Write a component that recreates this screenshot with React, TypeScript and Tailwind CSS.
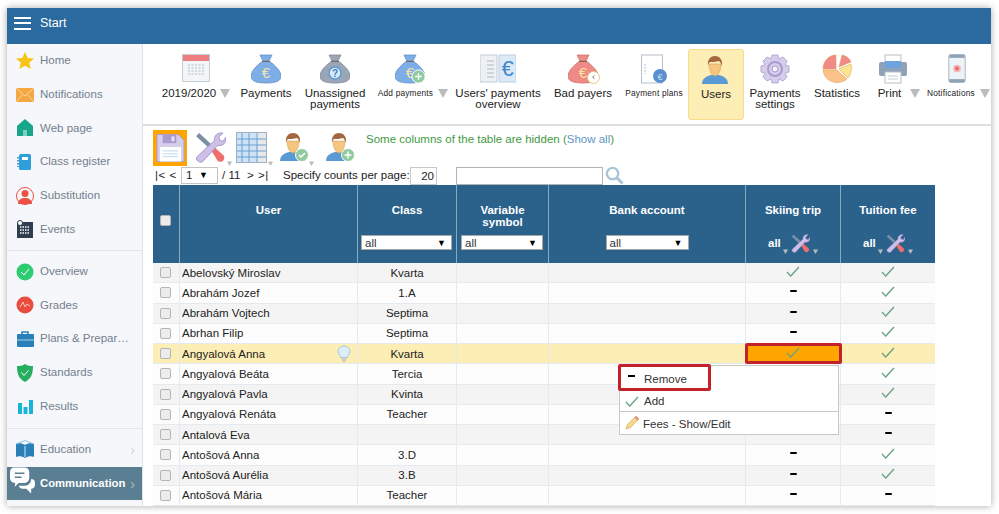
import { ReactNode } from 'react';

const Check = ({ className = 'w-[14px] h-[11px]' }: { className?: string }) => (
  <svg viewBox="0 0 15 12" className={className} fill="none">
    <path d="M1 6.500l4 4.500L14 1" stroke="#6aa583" strokeWidth="1.500" />
  </svg>
);

const Dash = () => <span className="block w-[7px] h-[2px] bg-black rounded-[1px]" />;

const Arrow = ({ className = '' }: { className?: string }) => (
  <svg viewBox="0 0 10 10" className={`w-[10px] h-[10px] ${className}`}>
    <path d="M0 1h10L5 10z" fill="#b9bcbc" />
  </svg>
);

const Bag = ({ fill, stroke, glyph, glyphColor = '#f7e6a0', disc }: { fill: string; stroke: string; glyph: string; glyphColor?: string; disc?: boolean }) => (
  <svg viewBox="0 0 30 30" className="w-[30px] h-[30px]">
    <path d="M9 1h12l-3 6h-6z" fill={fill} stroke={stroke} strokeWidth=".8" />
    <path d="M12 7h6c6 4 12 10 12 15 0 5-5 7-15 7S0 27 0 22C0 17 6 11 12 7z" fill={fill} stroke={stroke} strokeWidth=".8" />
    <path d="M11 7.500h8" stroke="#7a6a55" strokeWidth="1" />
    {disc && <circle cx="15" cy="19" r="6" fill="#dbe8f6" stroke="#5b9bd5" strokeWidth="1.500" />}
    <text x="15" y={disc ? 23 : 24} textAnchor="middle" fontSize={disc ? 10 : 15} fontWeight={disc ? 700 : 400} fontFamily="Liberation Sans" fill={glyphColor}>{glyph}</text>
  </svg>
);

const Plus = ({ cx, cy, r = 6.500 }: { cx: number; cy: number; r?: number }) => (
  <g>
    <circle cx={cx} cy={cy} r={r} fill="#8fcb9f" stroke="#fff" strokeWidth="1" />
    <path d={`M${cx - 3.500} ${cy}h7M${cx} ${cy - 3.500}v7`} stroke="#fff" strokeWidth="1.500" />
  </g>
);

const Person = ({ children }: { children?: ReactNode }) => (
  <svg viewBox="0 0 30 30" className="w-[30px] h-[30px]">
    <path d="M1 29c0-6 5-8 9-9h8c4 1 9 3 9 9z" fill="#5b9bd5" />
    <path d="M8 9c0 7 3 12 6 12s6-5 6-12z" fill="#f5c77e" stroke="#c99a55" strokeWidth=".5" />
    <path d="M7 11C6 4 10 1 14 1s8 3 7 10c-1-3-2-4-3-5-3 1-7 1-9 1-1 1-2 2-2 4z" fill="#a5673f" />
    {children}
  </svg>
);

const Wrench = ({ size = 'w-[31px] h-[31px]' }: { size?: string }) => (
  <svg viewBox="0 0 30 30" className={size}>
    <path d="M1 4l3-3 12 11-3 3z" fill="#7d8ea3" />
    <path d="M14 15l2-3 12 11c1 2 0 4-1 5s-4 1-5 0z" fill="#ef6f6c" />
    <path d="M2 24L19 8c-1-4 3-8 8-7l-4 4 1 3 3 1 3-4c1 5-3 9-8 8L7 29c-3 1-7-2-5-5z" fill="#cdbfe8" stroke="#9d8cc4" strokeWidth=".8" />
  </svg>
);

const tools = [
  {
    w: 'w-[72px]', label: '2019/2020', arrow: 'ml-[4px]',
    icon: (
      <svg viewBox="0 0 28 28" className="w-[28px] h-[28px]">
        <rect x=".5" y=".5" width="27" height="27" fill="#f3f5f7" stroke="#c4ccd4" />
        <rect x="1" y="1" width="26" height="6" fill="#ee7d7f" />
        <path d="M6 11h16M6 14h16M6 17h16M6 20h16" stroke="#c4d0dc" strokeWidth="1.400" strokeDasharray="2 1.500" />
      </svg>
    ),
  },
  { w: 'w-[68px]', label: 'Payments', icon: <Bag fill="#7eaee8" stroke="#6892c4" glyph="€" /> },
  { w: 'w-[70px]', label: 'Unassigned payments', tw: 'w-[64px]', icon: <Bag fill="#9aa5b5" stroke="#7f8a99" glyph="?" glyphColor="#3f7fc0" disc /> },
  {
    w: 'w-[80px]', label: 'Add payments', small: true, arrow: 'ml-[5px]', shift: 'ml-[6px]',
    icon: (
      <span className="relative block w-[30px] h-[30px]">
        <Bag fill="#7eaee8" stroke="#6892c4" glyph="€" />
        <svg viewBox="0 0 16 16" className="absolute -right-[1px] bottom-0 w-[15px] h-[15px]"><Plus cx={8} cy={8} r={7} /></svg>
      </span>
    ),
  },
  {
    w: 'w-[96px]', label: "Users' payments overview", tw: 'w-[96px]',
    icon: (
      <svg viewBox="0 0 36 30" className="w-[36px] h-[30px]">
        <path d="M0 1h17v27H0z" fill="#eef1f4" stroke="#c4ccd4" />
        <path d="M19 1h17v27H19z" fill="#dceaf8" stroke="#b8cfe4" />
        <path d="M7 7h7M7 11h7M7 15h7M7 19h7M7 23h7" stroke="#b0b8c0" />
        <text x="27.500" y="22" textAnchor="middle" fontSize="22" fontFamily="Liberation Sans" fill="#3f86cc">€</text>
      </svg>
    ),
  },
  {
    w: 'w-[74px]', label: 'Bad payers',
    icon: (
      <span className="relative block w-[30px] h-[30px]">
        <Bag fill="#f08a86" stroke="#cc7470" glyph="€" />
        <span className="absolute right-[-2px] bottom-0 w-[13px] h-[13px] rounded-full bg-white border border-[#e5c77a] text-[9px] leading-[10px] text-center text-[#555]">‹</span>
      </span>
    ),
  },
  {
    w: 'w-[68px]', label: 'Payment plans', small: true,
    icon: (
      <svg viewBox="0 0 30 30" className="w-[30px] h-[30px]">
        <rect x="2.500" y="1" width="21" height="28" fill="#fff" stroke="#b8c0c8" />
        <path d="M6 10v10" stroke="#c4ccd4" strokeWidth="1.500" strokeDasharray="1.500 1.500" />
        <circle cx="21" cy="22" r="7" fill="#5b8fd0" />
        <text x="21" y="25.500" textAnchor="middle" fontSize="9" fontFamily="Liberation Sans" fill="#cfe0f5">€</text>
      </svg>
    ),
  },
  { w: 'w-[56px]', label: 'Users', active: true, icon: <Person /> },
  {
    w: 'w-[62px]', label: 'Payments settings', tw: 'w-[54px]',
    icon: (
      <svg viewBox="0 0 30 30" className="w-[30px] h-[30px]">
        <path d="M12 1h6l1 4 4-2 4 4-2 4 4 1v6l-4 1 2 4-4 4-4-2-1 4h-6l-1-4-4 2-4-4 2-4-4-1v-6l4-1-2-4 4-4 4 2z" fill="#d5cdea" stroke="#a99bcf" strokeWidth=".8" />
        <circle cx="15" cy="15" r="7" fill="none" stroke="#a99bcf" strokeWidth="2" />
        <circle cx="15" cy="15" r="3" fill="#f5f5f5" stroke="#a99bcf" />
      </svg>
    ),
  },
  {
    w: 'w-[62px]', label: 'Statistics',
    icon: (
      <svg viewBox="0 0 30 30" className="w-[30px] h-[30px]">
        <path d="M14 15V1C6 1 1 8 1 15z" fill="#f08a86" stroke="#e5a24f" strokeWidth=".6" />
        <path d="M1 16h14l10 9c-7 6-22 5-24-9z" fill="#fbc28a" stroke="#e5a24f" strokeWidth=".6" />
        <path d="M17 13l3-12c5 1 8 4 9 7z" fill="#f08a86" stroke="#e5a24f" strokeWidth=".6" />
        <path d="M17 15l12-5c1 5 0 10-3 14z" fill="#fbe58e" stroke="#e5a24f" strokeWidth=".6" />
      </svg>
    ),
  },
  {
    w: 'w-[50px]', label: 'Print', arrow: 'ml-[9px]', shift: 'ml-[12px]',
    icon: (
      <svg viewBox="0 0 30 30" className="w-[30px] h-[30px]">
        <rect x="7" y="1" width="16" height="10" fill="#fff" stroke="#b8c0c8" />
        <rect x="1" y="8" width="28" height="14" rx="2" fill="#8fa2b8" />
        <rect x="7" y="7" width="16" height="7" fill="#6fa3e0" />
        <rect x="7" y="18" width="16" height="11" fill="#fff" stroke="#b8c0c8" />
        <path d="M10 22h10M10 25h10" stroke="#c4ccd4" />
      </svg>
    ),
  },
  {
    w: 'w-[78px]', label: 'Notifications', small: true, arrow: 'ml-[5px]', shift: 'ml-[3px]',
    icon: (
      <svg viewBox="0 0 18 30" className="w-[18px] h-[29px]">
        <rect x=".5" y=".5" width="17" height="29" rx="2" fill="#eef3f8" stroke="#a8b4c0" />
        <rect x="1" y="1" width="16" height="3" fill="#8fa2b8" />
        <rect x="1" y="26" width="16" height="3" fill="#8fa2b8" />
        <circle cx="9" cy="15" r="4" fill="#f5b5b5" />
        <circle cx="9" cy="15" r="2" fill="#e86a6a" />
      </svg>
    ),
  },
];

const Gem = ({ children }: { children: ReactNode }) => (
  <svg viewBox="0 0 20 20" className="w-[20px] h-[20px] shrink-0">{children}</svg>
);

const nav1 = [
  { label: 'Home', icon: <Gem><path d="M10 1l2.700 6 6.300.6-4.800 4.200 1.500 6.200L10 14.800 4.300 18l1.500-6.200L1 7.600 7.300 7z" fill="#f5c518" /></Gem> },
  { label: 'Notifications', icon: <Gem><rect x="1" y="3" width="18" height="14" fill="#f5a742" /><path d="M1 3l9 8 9-8M1 17l6-7M19 17l-6-7" stroke="#fbd9a6" fill="none" /></Gem> },
  { label: 'Web page', icon: <Gem><path d="M10 1l8 7v10H2V8z" fill="#17a689" /><rect x="8" y="12" width="4" height="6" fill="#7fd0bf" /></Gem> },
  { label: 'Class register', icon: <Gem><rect x="4" y="2" width="12" height="16" rx="1.500" fill="#2f9fdc" /><rect x="7" y="5" width="6" height="3" fill="#fff" /><path d="M3 5v10" stroke="#1c79ad" strokeWidth="1.500" strokeDasharray="1.500 1.500" /></Gem> },
  { label: 'Substitution', icon: <Gem><circle cx="10" cy="10" r="8.500" fill="none" stroke="#ee5044" strokeWidth="1" /><circle cx="10" cy="7.500" r="3.500" fill="#ee5044" /><path d="M3 18c0-5 4-6 7-6s7 1 7 6z" fill="#ee5044" /></Gem> },
  { label: 'Events', icon: <Gem><rect x="2" y="3" width="16" height="16" fill="#2d3e50" /><path d="M5 8h10M5 11h10M5 14h10" stroke="#fff" strokeWidth="1.500" strokeDasharray="1.500 1" /><circle cx="5" cy="4" r="2.500" fill="#fff" stroke="#2d3e50" /></Gem> },
];

const nav2 = [
  { label: 'Overview', icon: <Gem><circle cx="10" cy="10" r="8.500" fill="#2ecc71" /><path d="M6 10l3 3 5-6" stroke="#fff" fill="none" /></Gem> },
  { label: 'Grades', icon: <Gem><circle cx="10" cy="10" r="8.500" fill="#e74c3c" /><path d="M5 12l3-5 2 5 2-3 3 2" stroke="#f9c9c4" fill="none" /></Gem> },
  { label: 'Plans & Prepar…', icon: <Gem><rect x="2" y="5" width="17" height="13" rx="1" fill="#2980b9" /><path d="M7 5V3h6v2" stroke="#2980b9" fill="none" strokeWidth="1.500" /><path d="M2 11h17" stroke="#a9cfe8" /></Gem> },
  { label: 'Standards', icon: <Gem><path d="M10 1c3 2 5 2 8 2 0 8-2 13-8 16C4 16 2 11 2 3c3 0 5 0 8-2z" fill="#27ae60" /><path d="M6.500 9.500l2.500 3 4.500-5" stroke="#fff" fill="none" /></Gem> },
  { label: 'Results', icon: <Gem><path d="M3 7h4v11H3z" fill="#18b5d8" /><path d="M8.500 11h4v7h-4z" fill="#18b5d8" /><path d="M14 4h4v14h-4z" fill="#18b5d8" /></Gem> },
];

const rows = [
  ['Abelovský Miroslav', 'Kvarta', 1, 1],
  ['Abrahám Jozef', '1.A', 0, 1],
  ['Abrahám Vojtech', 'Septima', 0, 1],
  ['Abrhan Filip', 'Septima', 0, 1],
  ['Angyalová Anna', 'Kvarta', 1, 1],
  ['Angyalová Beáta', 'Tercia', 0, 1],
  ['Angyalová Pavla', 'Kvinta', 0, 1],
  ['Angyalová Renáta', 'Teacher', 0, 0],
  ['Antalová Eva', '', 0, 0],
  ['Antošová Anna', '3.D', 0, 1],
  ['Antošová Aurélia', '3.B', 0, 1],
  ['Antošová Mária', 'Teacher', 0, 0],
] as const;

const Box = () => <span className="block w-[11px] h-[11px] rounded-[2px] bg-[#ececec] border border-[#b4b4b4]" />;

const FilterSelect = ({ className }: { className: string }) => (
  <div className={`h-[15px] bg-white border border-[#a8a8a8] flex items-center justify-between pl-[3px] pr-[5px] text-[11.500px] font-normal text-[#333] ${className}`}>
    <span>all</span>
    <span className="text-[9px] text-black">▼</span>
  </div>
);

const HeadTools = () => (
  <div className="relative flex items-center gap-[10px] mt-auto mb-[12px] h-[16px] text-white text-[11.500px] pl-[22px]">
    <span>all</span>
    <Wrench size="w-[19px] h-[19px]" />
    <Arrow className="absolute left-[36px] bottom-[-3px] !w-[7px] !h-[5px]" />
    <Arrow className="absolute left-[66px] bottom-[-3px] !w-[7px] !h-[5px]" />
  </div>
);

export default function App() {
  return (
    <div className="w-[999px] h-[514px] bg-white pl-[7px] pt-[8px] pr-[8px] pb-[8px] font-['Liberation_Sans',Arial,sans-serif] overflow-hidden">
      <div className="h-full flex flex-col bg-white shadow-[0_0_7px_rgba(0,0,0,0.35)] overflow-hidden">
        <header className="h-[36px] shrink-0 bg-[#2a6a9e] flex items-center text-white pb-[6px]">
          <div className="ml-[7px] w-[17px] flex flex-col gap-[3.500px]">
            <span className="h-[2px] bg-white" />
            <span className="h-[2px] bg-white" />
            <span className="h-[2px] bg-white" />
          </div>
          <span className="ml-[9px] text-[12.500px]">Start</span>
        </header>

        <div className="flex flex-1 min-h-0">
          <aside className="w-[136px] shrink-0 bg-[#f5f7fa] border-r border-[#dfe4e8] flex flex-col text-[11.500px] text-[#74808f]">
            <div className="flex flex-col h-[206px]">
              {nav1.map((n) => (
                <div key={n.label} className="h-[33.700px] flex items-center pl-[8px] gap-[5px]">
                  {n.icon}
                  <span>{n.label}</span>
                </div>
              ))}
            </div>
            <div className="border-t border-[#e2e5e9] pt-[4px] h-[178px]">
              {nav2.map((n) => (
                <div key={n.label} className="h-[33.600px] flex items-center pl-[8px] gap-[5px] whitespace-nowrap">
                  {n.icon}
                  <span>{n.label}</span>
                </div>
              ))}
            </div>
            <div className="border-t border-[#e2e5e9] pt-[4px]">
              <div className="h-[34px] flex items-center pl-[8px] gap-[5px]">
                <Gem>
                  <path d="M10 5C7 3 3 3 1 4v13c2-1 6-1 9 1 3-2 7-2 9-1V4c-2-1-6-1-9 1z" fill="#2980b9" />
                  <path d="M1 4l9-3.500L19 4" stroke="#8fc1e3" fill="none" />
                  <path d="M10 6v11" stroke="#cfe5f3" />
                </Gem>
                <span>Education</span>
                <span className="ml-auto mr-[7px] text-[#cfd3d8] text-[14px] leading-none">›</span>
              </div>
              <div className="relative h-[33px] bg-[#5b7f92] flex items-center pl-[33px] text-white font-bold text-[11.300px]">
                <svg viewBox="0 0 26 30" className="absolute left-[3px] top-[-1px] w-[25px] h-[30px]">
                  <path d="M4 1h11c3 0 5 2 5 5v6c0 3-2 5-5 5H9l-4 4 .5-4C2 17 0 15 0 12V6c0-3 2-5 4-5z" fill="#fff" />
                  <path d="M5 7h10M5 11h7" stroke="#5b7f92" strokeWidth="1.500" />
                  <path d="M22 13c2 0 4 1 4 4v2c0 3-2 4-4 4v5l-5-5h-4c-2 0-3-1-4-3h7c3 0 6-3 6-7z" fill="#fff" />
                </svg>
                <span>Communication</span>
                <span className="ml-auto mr-[7px] text-[#a6bac5] text-[14px] leading-none font-normal">›</span>
              </div>
            </div>
          </aside>

          <main className="flex-1 min-w-0 flex flex-col">
            <div className="h-[82px] shrink-0 border-b-2 border-[#dfdfdf] flex pl-[17px] pt-[5px] text-[#222]">
              {tools.map((t) => (
                <div
                  key={t.label}
                  className={`${t.w} h-[71px] shrink-0 flex flex-col items-center pt-[5px] ${t.active ? 'bg-[#fdeeb5] border border-[#f9dc8e] rounded-[3px]' : ''}`}
                >
                  <div className="h-[30px] flex items-start justify-center">{t.icon}</div>
                  <div className={`mt-[4px] flex items-center justify-center whitespace-nowrap ${t.shift ?? ''}`}>
                    <span className={`text-center leading-[10.500px] ${t.small ? 'text-[8.300px] tracking-[0.2px]' : 'text-[11.500px] whitespace-normal'} ${t.tw ?? ''}`}>
                      {t.label}
                    </span>
                    {t.arrow && <Arrow className={t.arrow} />}
                  </div>
                </div>
              ))}
            </div>

            <div className="flex-1 min-h-0 pl-[10px] pt-[4px] overflow-hidden">
              <div className="h-[36px] flex">
                <div className="w-[34px] h-[36px] bg-[#ffa500] flex items-center justify-center">
                  <svg viewBox="0 0 30 30" className="w-[29px] h-[30px]">
                    <path d="M1 1h22l6 6v22H1z" fill="#d5cdea" stroke="#a99bcf" />
                    <rect x="7" y="1" width="14" height="9" fill="#a99bcf" />
                    <rect x="16" y="3" width="3" height="5" fill="#e8e4f3" />
                    <rect x="4" y="14" width="22" height="15" fill="#fff" />
                    <path d="M7 18h16M7 21h16M7 24h16" stroke="#bcd6ee" />
                  </svg>
                </div>
                <div className="relative ml-[8px] mt-[2px]"><Wrench /><Arrow className="absolute right-[-7px] bottom-[0px] !w-[7px] !h-[5px]" /></div>
                <div className="relative ml-[10px] mt-[2px]">
                  <svg viewBox="0 0 31 31" className="w-[31px] h-[31px]">
                    <rect x=".5" y=".5" width="30" height="30" fill="#cfe3f7" stroke="#9fb0c0" />
                    <rect x="21" y="1" width="9" height="29" fill="#e6e8ea" />
                    <path d="M6 1v29M13 1v29M21 1v29M1 7h29M1 13h29M1 19h29M1 25h29" stroke="#6b9fd0" />
                  </svg>
                  <Arrow className="absolute right-[-7px] bottom-[0px] !w-[7px] !h-[5px]" />
                </div>
                <div className="relative ml-[12px] mt-[2px]">
                  <Person>
                    <circle cx="23" cy="23" r="6.500" fill="#8fcb9f" stroke="#fff" />
                    <path d="M20 23l2 2 4-4" stroke="#fff" strokeWidth="1.500" fill="none" />
                  </Person>
                  <Arrow className="absolute right-[-6px] bottom-[0px] !w-[7px] !h-[5px]" />
                </div>
                <div className="ml-[16px] mt-[2px]">
                  <Person><Plus cx={23} cy={23} /></Person>
                </div>
                <p className="ml-[11px] mt-[2px] text-[11.500px] leading-[14px] text-[#3f9a3f]">
                  Some columns of the table are hidden (<span className="text-[#5c97c4]">Show all</span>)
                </p>
              </div>

              <div className="h-[19px] flex items-center text-[11.500px] text-[#222] whitespace-nowrap">
                <span className="ml-[2px] w-[26px] tracking-[0.5px]">|&lt; &lt;</span>
                <div className="w-[37px] h-[17px] bg-white border border-[#c4c4c4] flex items-center justify-between pl-[4px] pr-[9px]">
                  <span>1</span>
                  <span className="text-[9px] text-black">▼</span>
                </div>
                <span className="ml-[4px] w-[25px]">/ 11</span>
                <span className="w-[36px] tracking-[0.5px]">&gt; &gt;|</span>
                <span className="w-[127px]">Specify counts per page:</span>
                <div className="w-[27px] h-[18px] bg-white border border-[#c8c8c8] text-right pr-[2px] leading-[16px]">20</div>
                <div className="ml-[19px] w-[147px] h-[18px] bg-white border border-[#b4b4b4]" />
                <svg viewBox="0 0 20 20" className="ml-[2px] w-[19px] h-[19px]" fill="none">
                  <circle cx="8" cy="8" r="6" stroke="#a9c6d8" strokeWidth="2.500" fill="#fff" />
                  <path d="M12.500 12.500l6 6" stroke="#a9c6d8" strokeWidth="3" />
                </svg>
              </div>

              <div className="relative w-[782px] text-[11.500px] text-[#222]">
                <div className="grid grid-cols-[27px_178px_99px_92px_197px_95px_94px] h-[78px] bg-[#2b628c] text-white font-bold text-[11.500px] leading-[12px] text-center">
                  <div className="flex items-center justify-center pb-[8px] pr-[1px] border-r border-[#8aaabf]"><Box /></div>
                  <div className="pt-[19px] border-r border-[#8aaabf]">User</div>
                  <div className="pt-[19px] px-[3px] flex flex-col border-r border-[#8aaabf]">
                    <span>Class</span>
                    <FilterSelect className="mt-[19px] w-[91px]" />
                  </div>
                  <div className="pt-[19px] px-[4px] flex flex-col border-r border-[#8aaabf]">
                    <span>Variable symbol</span>
                    <FilterSelect className="mt-[7px] w-[82px]" />
                  </div>
                  <div className="pt-[19px] flex flex-col items-center border-r border-[#8aaabf]">
                    <span>Bank account</span>
                    <FilterSelect className="mt-[19px] w-[83px]" />
                  </div>
                  <div className="pt-[19px] flex flex-col border-r border-[#8aaabf]">
                    <span>Skiing trip</span>
                    <HeadTools />
                  </div>
                  <div className="pt-[19px] flex flex-col">
                    <span>Tuition fee</span>
                    <HeadTools />
                  </div>
                </div>

                {rows.map((r, i) => {
                  const active = i === 4;
                  const stripe = active ? 'bg-[#fdeeb5]' : i % 2 === 0 ? 'bg-[#f4f4f4]' : 'bg-[#fdfdfd]';
                  return (
                    <div key={r[0]} className={`grid grid-cols-[27px_178px_99px_92px_197px_95px_94px] h-[20.250px] border-b border-[#e3eaf0] ${stripe}`}>
                      <div className="flex items-center justify-center pr-[1px] border-r border-[#e3eaf0]"><Box /></div>
                      <div className="relative flex items-center pl-[2px] pt-[1px] border-r border-[#e3eaf0]">
                        {r[0]}
                        {active && (
                          <svg viewBox="0 0 14 18" className="absolute right-[6px] top-[1px] w-[14px] h-[18px]">
                            <path d="M7 1c3.500 0 6 2.500 6 5.500 0 2.500-2 4-2.500 6h-7C3 10.500 1 9 1 6.500 1 3.500 3.500 1 7 1z" fill="#dcecf8" stroke="#a9c6d8" />
                            <path d="M4.500 14h5M5 16h4" stroke="#a9b4bc" />
                          </svg>
                        )}
                      </div>
                      <div className="flex items-center justify-center pt-[1px] border-r border-[#e3eaf0]">{r[1]}</div>
                      <div className="border-r border-[#e3eaf0]" />
                      <div className="border-r border-[#e3eaf0]" />
                      <div className={`flex items-center justify-center pb-[3px] border-r border-[#e3eaf0] ${active ? 'relative z-10 bg-[#ffa500] outline-[3px] outline-solid outline-[#c4222a] -outline-offset-2 rounded-[1px]' : ''}`}>
                        {r[2] ? <Check /> : <Dash />}
                      </div>
                      <div className="flex items-center justify-center pb-[3px]">
                        {r[3] ? <Check /> : <Dash />}
                      </div>
                    </div>
                  );
                })}

                <div className="absolute left-[466px] top-[180px] w-[220px] h-[70px] z-20 bg-white border border-[#c8c8c8] text-[11.500px] text-[#333] flex flex-col">
                  <div className="relative h-[26px] flex items-center pl-[24px] pt-[2px]">
                    <span className="absolute left-[8px] top-[9px] w-[7px] h-[2px] bg-black" />
                    Remove
                    <span className="absolute left-[-2px] top-[-2px] w-[93px] h-[27px] border-[3px] border-[#c4222a] rounded-[2px]" />
                  </div>
                  <div className="h-[20px] flex items-center pl-[5px] gap-[5px] border-b border-[#c8c8c8]">
                    <Check />
                    Add
                  </div>
                  <div className="h-[22px] flex items-center pl-[5px] gap-[3px] pt-[4px]">
                    <svg viewBox="0 0 15 15" className="w-[15px] h-[15px] -mt-[5px]">
                      <path d="M1 14l1-4L11 1l3 3-9 9z" fill="#f5d78a" stroke="#d0a850" strokeWidth=".6" />
                      <path d="M11 1l3 3-1.500 1.500-3-3z" fill="#ee8a86" />
                    </svg>
                    Fees - Show/Edit
                  </div>
                </div>
              </div>
            </div>
          </main>
        </div>
      </div>
    </div>
  );
}
